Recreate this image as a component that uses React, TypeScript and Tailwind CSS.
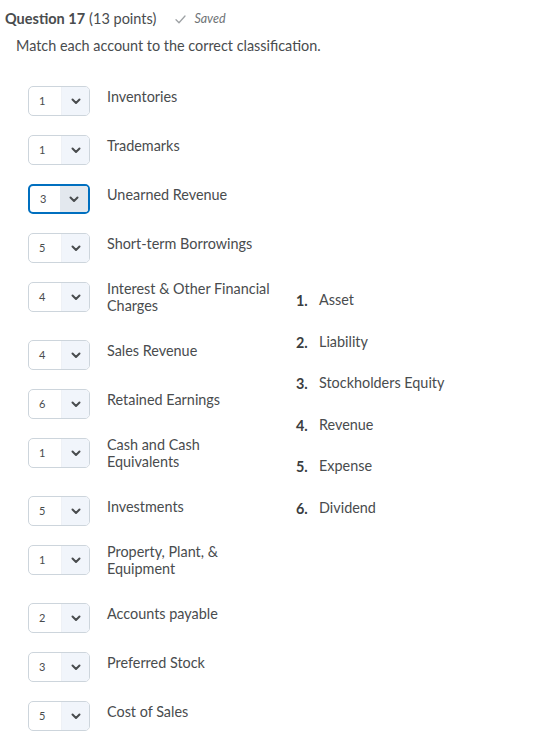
import React from "react";

interface Row {
  value: string;
  lines: string[];
  focused?: boolean;
}

const rows: Row[] = [
  { value: "1", lines: ["Inventories"] },
  { value: "1", lines: ["Trademarks"] },
  { value: "3", lines: ["Unearned Revenue"], focused: true },
  { value: "5", lines: ["Short-term Borrowings"] },
  { value: "4", lines: ["Interest & Other Financial", "Charges"] },
  { value: "4", lines: ["Sales Revenue"] },
  { value: "6", lines: ["Retained Earnings"] },
  { value: "1", lines: ["Cash and Cash", "Equivalents"] },
  { value: "5", lines: ["Investments"] },
  { value: "1", lines: ["Property, Plant, &", "Equipment"] },
  { value: "2", lines: ["Accounts payable"] },
  { value: "3", lines: ["Preferred Stock"] },
  { value: "5", lines: ["Cost of Sales"] },
];

const choices = ["Asset", "Liability", "Stockholders Equity", "Revenue", "Expense", "Dividend"];

function Chevron() {
  return (
    <svg width="10" height="7" viewBox="0 0 10 7" fill="none">
      <path d="M1.5 1.5 L5 5 L8.5 1.5" stroke="#494c4e" strokeWidth="2" strokeLinecap="round" strokeLinejoin="round" />
    </svg>
  );
}

function MatchSelect({ value, focused }: { value: string; focused?: boolean }) {
  return (
    <div
      className={`flex h-[30px] w-[62px] shrink-0 overflow-hidden rounded-[5px] bg-white ${
        focused ? "border-2 border-[#006fbf]" : "border border-[#cdd5dc]"
      }`}
    >
      <div className="flex flex-1 items-center pl-[10px] text-[11px] text-[#494c4e]">{value}</div>
      <div
        className={`flex w-[28px] items-center justify-center ${
          focused ? "bg-[#e3e8ee]" : "border-l border-[#eef1f6] bg-[#f1f5fb]"
        }`}
      >
        <Chevron />
      </div>
    </div>
  );
}

export default function App() {
  return (
    <div
      className="min-h-screen w-[560px] bg-white text-[#494c4e]"
      style={{ fontFamily: "Lato, 'Open Sans', sans-serif" }}
    >
      {/* Header */}
      <div className="flex items-center pl-[5px] pt-[9px] leading-[20px]">
        <span className="text-[14.5px] font-bold text-[#494c4e]">Question 17</span>
        <span className="ml-[4px] text-[14.5px]">(13 points)</span>
        <span className="ml-[19px] flex items-center text-[12.5px] italic text-[#6e7376]">
          <svg width="11" height="9" viewBox="0 0 11 9" fill="none" className="mr-[8px]">
            <path d="M1 4.8 L4 7.8 L10 1" stroke="#9ea2a5" strokeWidth="1.3" strokeLinecap="round" strokeLinejoin="round" />
          </svg>
          Saved
        </span>
      </div>
      <p className="mt-[7px] pl-[16px] text-[14.4px] leading-[20px]">Match each account to the correct classification.</p>

      {/* Matching area */}
      <div className="mt-[20px] flex items-start">
        <div className="w-[279px] pl-[28px]">
          {rows.map((row, i) => {
            const double = row.lines.length > 1;
            return (
              <div key={i} className={`flex items-start gap-[17px] pt-[10px] ${double ? "h-[58px]" : "h-[49px]"}`}>
                <MatchSelect value={row.value} focused={row.focused} />
                <div className={`text-[14.4px] leading-[17px] ${double ? "-mt-[2px]" : "mt-[2px]"}`}>
                  {row.lines.map((l, j) => (
                    <div key={j} className="whitespace-nowrap">
                      {l}
                    </div>
                  ))}
                </div>
              </div>
            );
          })}
        </div>

        <ol className="ml-[17px] mt-[215px] flex flex-col gap-[24.6px] text-[14.4px] leading-[17px]">
          {choices.map((c, i) => (
            <li key={c} className="flex whitespace-nowrap">
              <span className="w-[23px] translate-y-[1px] font-bold text-[#3a3d40]">{i + 1}.</span>
              <span>{c}</span>
            </li>
          ))}
        </ol>
      </div>
    </div>
  );
}
